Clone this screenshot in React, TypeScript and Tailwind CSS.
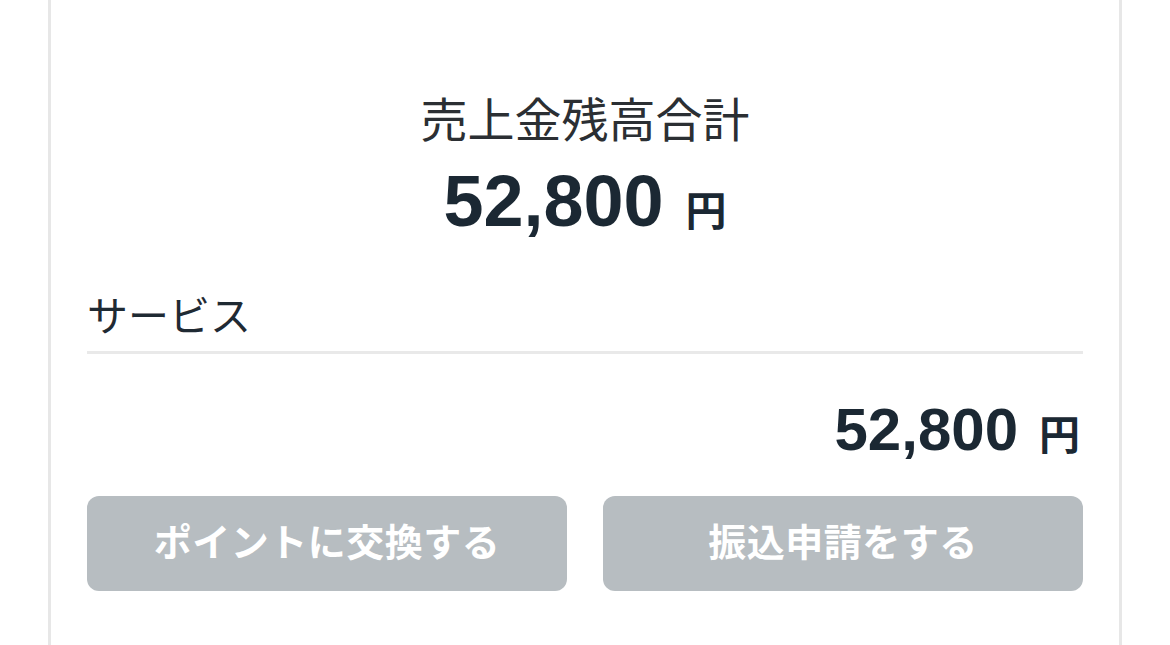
import React from 'react';

const JP = "font-['Liberation_Sans','Noto_Sans_CJK_JP',sans-serif]";

function Amount({ value, size }: { value: string; size: 'lg' | 'md' }) {
  return (
    <div className="flex items-baseline font-bold text-[#1b2833]">
      <span className={size === 'lg' ? 'text-[72px] leading-none' : 'text-[60px] leading-none'}>
        {value}
      </span>
      <span
        className={
          size === 'lg'
            ? "ml-[22px] font-['Noto_Sans_CJK_JP',sans-serif] text-[41px] leading-none"
            : "ml-[21px] font-['Noto_Sans_CJK_JP',sans-serif] text-[41px] leading-none"
        }
      >
        円
      </span>
    </div>
  );
}

function ActionButton({ label }: { label: string }) {
  return (
    <button
      type="button"
      disabled
      className="flex h-[95px] flex-1 items-center justify-center rounded-[12px] bg-[#b7bdc1] text-[38px] font-bold tracking-[0.5px] text-white"
    >
      {label}
    </button>
  );
}

export default function App() {
  return (
    <div className={`min-h-[645px] w-full bg-white ${JP}`}>
      <section className="mx-[48px] min-h-[645px] border-x-[3px] border-[#e7e7e7] px-[36px]">
        {/* balance summary */}
        <div className="flex flex-col items-center pt-[91px]">
          <h2 className="font-['Noto_Sans_CJK_JP',sans-serif] text-[47px] leading-[1.1] font-normal text-[#2b2f33]">
            売上金残高合計
          </h2>
          <div className="mt-[22px]">
            <Amount value="52,800" size="lg" />
          </div>
        </div>

        {/* service breakdown */}
        <div className="mt-[56px] border-b-[3px] border-[#e9e9e9] pb-[13px]">
          <span className="font-['Noto_Sans_CJK_JP',sans-serif] text-[41px] leading-none text-[#1f2a33]">
            サービス
          </span>
        </div>
        <div className="mt-[46px] flex justify-end pr-[3px]">
          <Amount value="52,800" size="md" />
        </div>

        <div className="mt-[36px] flex gap-[36px]">
          <ActionButton label="ポイントに交換する" />
          <ActionButton label="振込申請をする" />
        </div>
      </section>
    </div>
  );
}
